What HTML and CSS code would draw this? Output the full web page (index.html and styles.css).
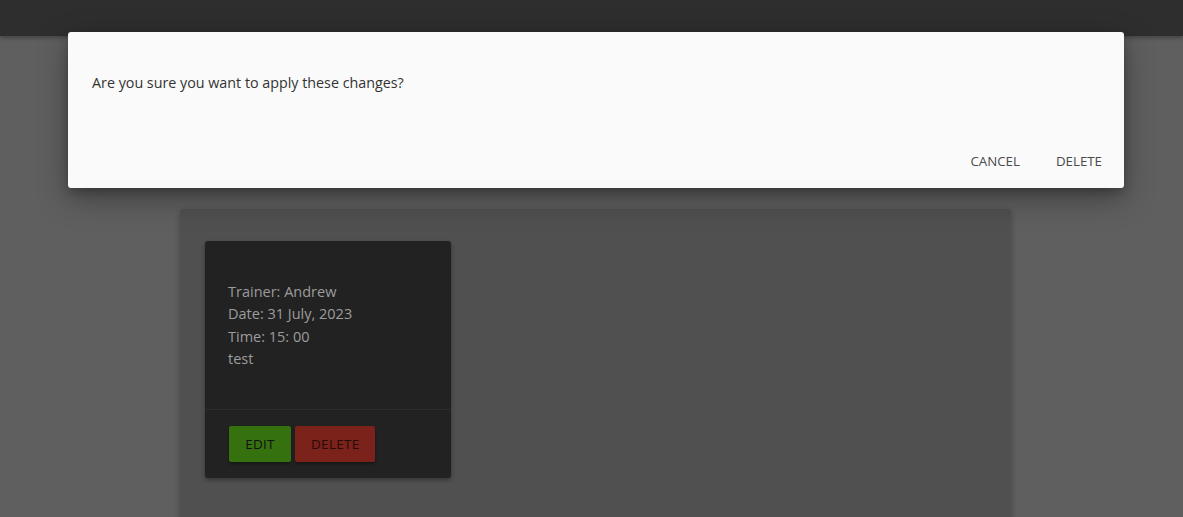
FILE: index.html
```html
<!DOCTYPE html>
<html>
<head>
<meta charset="utf-8">
<link rel="stylesheet" href="styles.css">
</head>
<body>
<header class="appbar"></header>
<main class="main">
  <section class="panel">
    <article class="card">
      <div class="card-text">
        <div>Trainer: Andrew</div>
        <div>Date: 31 July, 2023</div>
        <div>Time: 15: 00</div>
        <div>test</div>
      </div>
      <div class="card-actions">
        <button class="btn btn-edit">EDIT</button>
        <button class="btn btn-delete">DELETE</button>
      </div>
    </article>
  </section>
</main>
<div class="overlay">
  <div class="dialog">
    <div class="dialog-text">Are you sure you want to apply these changes?</div>
    <div class="dialog-actions">
      <button class="text-btn">CANCEL</button>
      <button class="text-btn">DELETE</button>
    </div>
  </div>
</div>
</body>
</html>
```
FILE: styles.css
```css
* { box-sizing: border-box; }
html, body { margin: 0; padding: 0; }
html { overflow: hidden; }
body {
  width: 1183px;
  height: 517px;
  overflow: hidden;
  background: #5f5f5f;
  font-family: "Open Sans", "Noto Sans", sans-serif;
  position: relative;
}
.appbar {
  height: 36px;
  background: #2e2e2e;
  box-shadow: 0 2px 4px rgba(0,0,0,0.3);
  position: relative;
  z-index: 1;
}
.main {
  display: flex;
  padding-top: 173px;
  padding-left: 180px;
}
.panel {
  width: 831px;
  height: 330px;
  background: #505050;
  border-radius: 4px;
  box-shadow: 0 2px 6px rgba(0,0,0,0.25);
  padding: 32px 25px 0;
}
.card {
  width: 246px;
  background: #222222;
  border-radius: 3px;
  box-shadow: 0 2px 4px rgba(0,0,0,0.35);
}
.card-text {
  padding: 40px 23px 39px;
  color: #9c9c9c;
  font-size: 14.5px;
  line-height: 22.33px;
  border-bottom: 1px solid #2d2d2d;
}
.card-actions {
  display: flex;
  gap: 4px;
  padding: 16px 24px 16px 24px;
}
.btn {
  height: 36px;
  border: none;
  border-radius: 2px;
  font-family: inherit;
  font-size: 13.5px;
  color: #111;
  padding: 0 16px;
  box-shadow: 0 2px 3px rgba(0,0,0,0.35);
  letter-spacing: 0.3px;
}
.btn-edit { background: #36710f; width: 62px; }
.btn-delete { background: #7b221b; width: 80px; color: #2a0a08; }
.overlay {
  position: absolute;
  inset: 0;
  display: flex;
  justify-content: flex-start;
  align-items: flex-start;
  padding-top: 32px;
  padding-left: 68px;
  z-index: 5;
}
.dialog {
  width: 1056px;
  height: 156px;
  background: #fafafa;
  border-radius: 3px;
  box-shadow: 0 10px 30px rgba(0,0,0,0.35), 0 4px 10px rgba(0,0,0,0.2);
  display: flex;
  flex-direction: column;
  justify-content: space-between;
}
.dialog-text {
  padding: 41px 24px 0;
  font-size: 14.3px;
  line-height: 20px;
  color: #333;
}
.dialog-actions {
  display: flex;
  justify-content: flex-end;
  gap: 4px;
  padding: 0 6px 9px 8px;
}
.text-btn {
  height: 36px;
  background: transparent;
  border: none;
  font-family: inherit;
  font-size: 13.3px;
  color: #4a4a4a;
  padding: 0 16px;
}
```
